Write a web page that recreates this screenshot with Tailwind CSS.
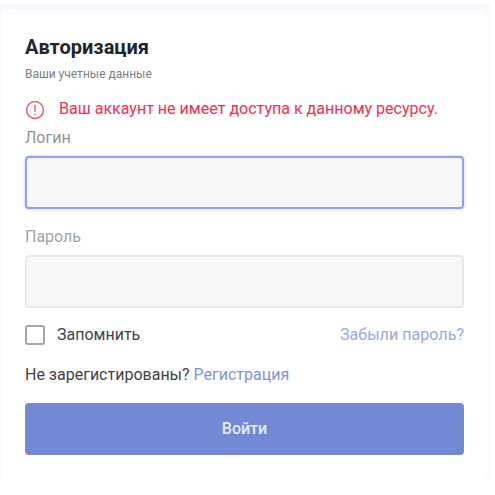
<!DOCTYPE html>
<html lang="ru">
<head>
    <meta charset="UTF-8">
    <meta name="viewport" content="width=device-width, initial-scale=1.0">
    <title>Авторизация</title>
    <script src="https://cdn.jsdelivr.net/npm/@tailwindcss/browser@4"></script>
</head>
<body class="bg-white font-['Roboto',sans-serif]">

<div class="w-[490px] h-[475px] mt-[4px] bg-[#f8f9fe] pt-[5px] pr-[2px] pl-[1px]">
    <div class="h-[470px] bg-white rounded-[6px] pt-[27px] px-[24px]">
        <h1 class="text-[20px] leading-[22px] font-bold text-[#212529]">Авторизация</h1>
        <p class="mt-[9px] text-[12px] leading-[14px] text-[#7a7f85]">Ваши учетные данные</p>

        <div class="mt-[16px] flex items-center gap-[14px] h-[24px] text-[#f1304f]">
            <svg class="w-[20px] h-[20px] mt-[2px] text-[#f0596e]" viewBox="0 0 20 20" fill="none" stroke="currentColor" stroke-width="1.5" stroke-linecap="round">
                <circle cx="10" cy="10" r="8.4"/>
                <path d="M10 5.6v5.6"/>
                <path d="M10 14.2v.2"/>
            </svg>
            <span class="text-[16px] leading-[24px] tracking-[0.02px]">Ваш аккаунт не имеет доступа к данному ресурсу.</span>
        </div>

        <label class="block mt-[5px] text-[16px] leading-[24px] text-[#8f9499]">Логин</label>
        <input type="text" class="block mt-[6px] w-full h-[53px] bg-[#f8f8f8] rounded-[4px] border-2 border-[#8fa3e6] shadow-[0_0_2px_1px_rgba(115,137,213,0.25)]">

        <label class="block mt-[16px] text-[16px] leading-[24px] text-[#a0a4a8]">Пароль</label>
        <input type="text" class="block mt-[6px] w-full h-[53px] bg-[#f8f8f8] rounded-[4px] border-2 border-[#e8e8e8]">

        <div class="mt-[15px] flex items-center justify-between">
            <label class="flex items-center gap-[12px] text-[16px] leading-[24px] text-[#3f4347]">
                <span class="w-[20px] h-[20px] rounded-[3px] border-2 border-[#a6a6a6] bg-white"></span>
                Запомнить
            </label>
            <a class="text-[16px] leading-[24px] tracking-[0.05px] text-[#98a8e2]">Забыли пароль?</a>
        </div>

        <p class="mt-[16px] text-[16px] leading-[24px] text-[#3f4347]">Не зарегистированы? <a class="text-[#7f93dc]">Регистрация</a></p>

        <button class="mt-[16px] w-full h-[52px] bg-[#7389d5] rounded-[4px] text-[16px] font-medium text-[#e9edfb]">Войти</button>
    </div>
</div>

</body>
</html>
